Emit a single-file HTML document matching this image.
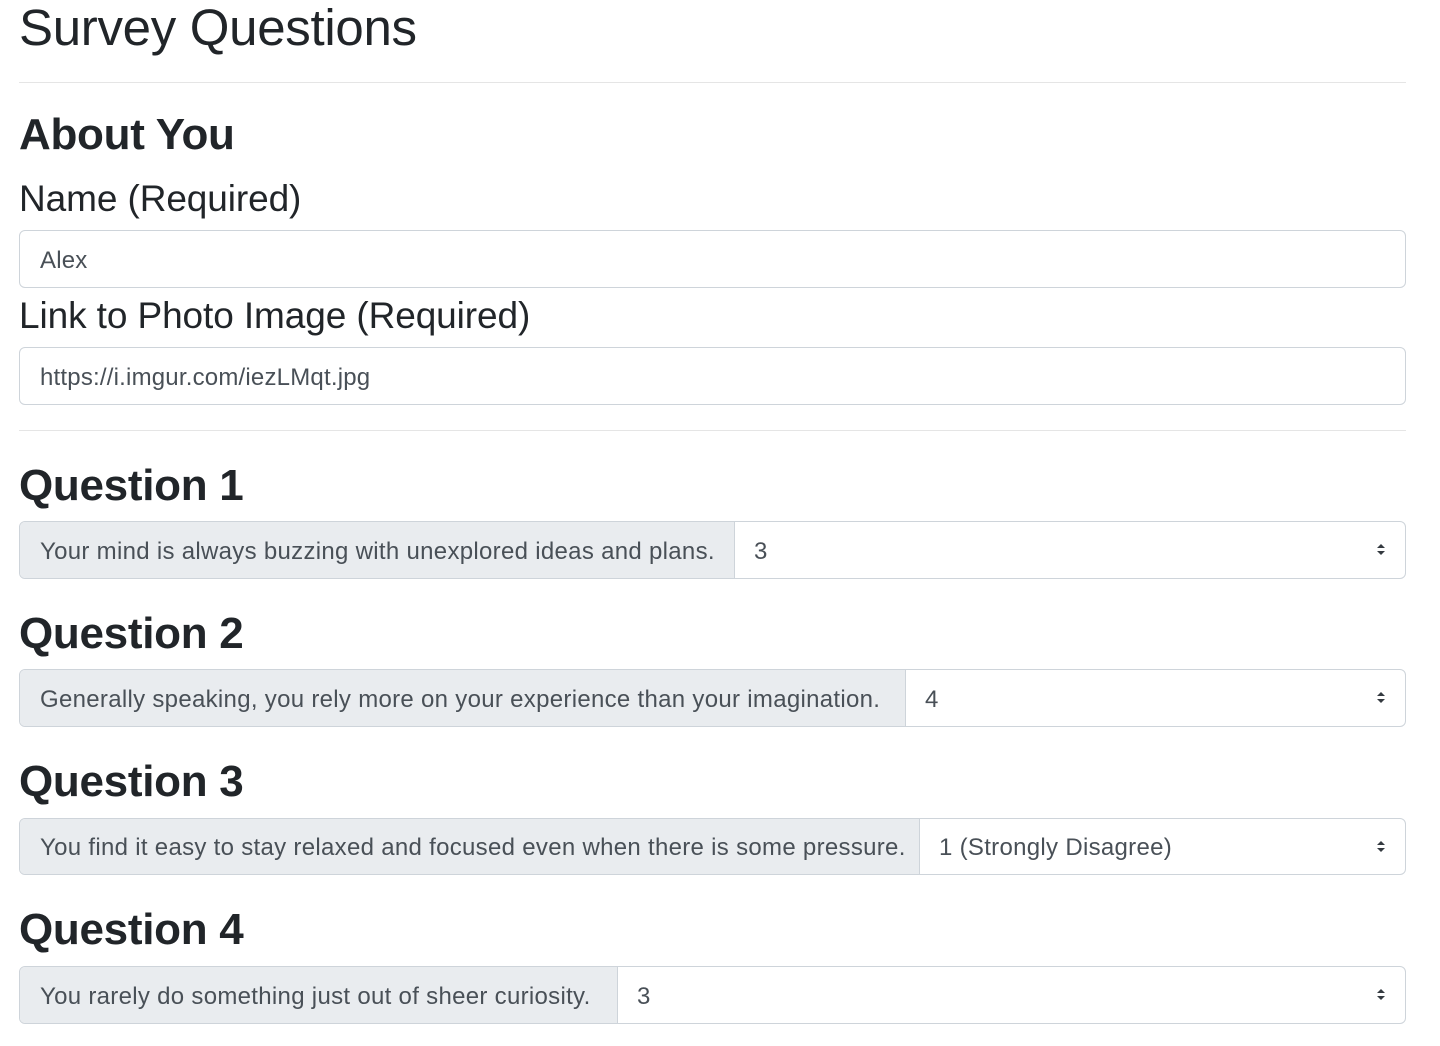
<!DOCTYPE html>
<html><head><meta charset="utf-8">
<style>
html,body{margin:0;padding:0;background:#fff;width:1440px;height:1046px;overflow:hidden}
body{font-family:"Liberation Sans",sans-serif;color:#212529;position:relative}
.a{position:absolute;left:19px;white-space:nowrap;line-height:1.2}
.t{font-size:51px;font-weight:400;top:-3px;letter-spacing:-0.3px}
.h{font-size:44px;font-weight:700;letter-spacing:-0.3px}
.l{font-size:37px;font-weight:400;letter-spacing:-0.1px}
.hr{position:absolute;left:19px;width:1387px;height:1px;background:#e5e5e5}
.in{position:absolute;left:19px;width:1387px;border:1px solid #ced4da;border-radius:6px;background:#fff;color:#495057;font-size:24px;display:flex;align-items:center;box-sizing:border-box;height:58px;padding-left:20px;padding-top:3px;letter-spacing:0.2px}
.g{position:absolute;left:19px;width:1387px;height:58px;border:1px solid #ced4da;border-radius:6px;box-sizing:border-box;display:flex;overflow:hidden;font-size:24px;color:#495057;letter-spacing:0.3px}
.ad{background:#e9ecef;border-right:1px solid #ced4da;display:flex;align-items:center;padding-left:20px;padding-top:3px;box-sizing:border-box;white-space:nowrap;overflow:hidden}
.se{flex:1;display:flex;align-items:center;padding-left:19px;padding-top:3px;position:relative}
.ar{position:absolute;right:19px;top:21px;width:10px;height:14px}
</style></head><body>
<div class="a t">Survey Questions</div>
<div class="hr" style="top:82px"></div>
<div class="a h" style="top:109px">About You</div>
<div class="a l" style="top:177px">Name (Required)</div>
<div class="in" style="top:230px">Alex</div>
<div class="a l" style="top:294px">Link to Photo Image (Required)</div>
<div class="in" style="top:347px">https://i.imgur.com/iezLMqt.jpg</div>
<div class="hr" style="top:430px"></div>

<div class="a h" style="top:460px">Question 1</div>
<div class="g" style="top:521px"><div class="ad" style="width:715px">Your mind is always buzzing with unexplored ideas and plans.</div><div class="se">3<svg class="ar" viewBox="0 0 10 14"><path d="M1 5L5 1L9 5Z M1 8L5 12L9 8Z" fill="#343a40"/></svg></div></div>

<div class="a h" style="top:608px">Question 2</div>
<div class="g" style="top:669px"><div class="ad" style="width:886px">Generally speaking, you rely more on your experience than your imagination.</div><div class="se">4<svg class="ar" viewBox="0 0 10 14"><path d="M1 5L5 1L9 5Z M1 8L5 12L9 8Z" fill="#343a40"/></svg></div></div>

<div class="a h" style="top:756px">Question 3</div>
<div class="g" style="top:818px;height:57px"><div class="ad" style="width:900px">You find it easy to stay relaxed and focused even when there is some pressure.</div><div class="se">1 (Strongly Disagree)<svg class="ar" viewBox="0 0 10 14"><path d="M1 5L5 1L9 5Z M1 8L5 12L9 8Z" fill="#343a40"/></svg></div></div>

<div class="a h" style="top:904px">Question 4</div>
<div class="g" style="top:966px"><div class="ad" style="width:598px">You rarely do something just out of sheer curiosity.</div><div class="se">3<svg class="ar" viewBox="0 0 10 14"><path d="M1 5L5 1L9 5Z M1 8L5 12L9 8Z" fill="#343a40"/></svg></div></div>
</body></html>
